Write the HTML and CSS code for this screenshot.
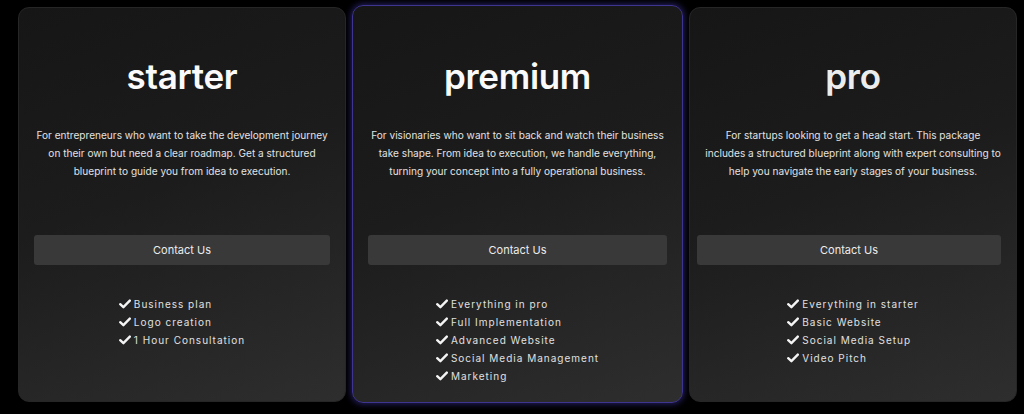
FILE: index.html
```html
<!DOCTYPE html>
<html lang="en">
<head>
<meta charset="utf-8">
<title>Pricing</title>
<link rel="stylesheet" href="styles.css">
</head>
<body>
<main class="plans">
  <section class="card">
    <h2 class="title">starter</h2>
    <p class="desc">For entrepreneurs who want to take the development journey on their own but need a clear roadmap. Get a structured blueprint to guide you from idea to execution.</p>
    <button class="cta">Contact Us</button>
    <ul class="features">
      <li><svg class="check" viewBox="0 0 12 10"><polyline points="1.2,5.2 4.4,8.2 10.8,1.6"/></svg>Business plan</li>
      <li><svg class="check" viewBox="0 0 12 10"><polyline points="1.2,5.2 4.4,8.2 10.8,1.6"/></svg>Logo creation</li>
      <li><svg class="check" viewBox="0 0 12 10"><polyline points="1.2,5.2 4.4,8.2 10.8,1.6"/></svg>1 Hour Consultation</li>
    </ul>
  </section>
  <section class="card card-featured">
    <h2 class="title">premium</h2>
    <p class="desc">For visionaries who want to sit back and watch their business take shape. From idea to execution, we handle everything, turning your concept into a fully operational business.</p>
    <button class="cta">Contact Us</button>
    <ul class="features">
      <li><svg class="check" viewBox="0 0 12 10"><polyline points="1.2,5.2 4.4,8.2 10.8,1.6"/></svg>Everything in pro</li>
      <li><svg class="check" viewBox="0 0 12 10"><polyline points="1.2,5.2 4.4,8.2 10.8,1.6"/></svg>Full Implementation</li>
      <li><svg class="check" viewBox="0 0 12 10"><polyline points="1.2,5.2 4.4,8.2 10.8,1.6"/></svg>Advanced Website</li>
      <li><svg class="check" viewBox="0 0 12 10"><polyline points="1.2,5.2 4.4,8.2 10.8,1.6"/></svg>Social Media Management</li>
      <li><svg class="check" viewBox="0 0 12 10"><polyline points="1.2,5.2 4.4,8.2 10.8,1.6"/></svg>Marketing</li>
    </ul>
  </section>
  <section class="card">
    <h2 class="title title-muted">pro</h2>
    <p class="desc">For startups looking to get a head start. This package<br>includes a structured blueprint along with expert consulting to help you navigate the early stages of your business.</p>
    <button class="cta cta-wide">Contact Us</button>
    <ul class="features">
      <li><svg class="check" viewBox="0 0 12 10"><polyline points="1.2,5.2 4.4,8.2 10.8,1.6"/></svg>Everything in starter</li>
      <li><svg class="check" viewBox="0 0 12 10"><polyline points="1.2,5.2 4.4,8.2 10.8,1.6"/></svg>Basic Website</li>
      <li><svg class="check" viewBox="0 0 12 10"><polyline points="1.2,5.2 4.4,8.2 10.8,1.6"/></svg>Social Media Setup</li>
      <li><svg class="check" viewBox="0 0 12 10"><polyline points="1.2,5.2 4.4,8.2 10.8,1.6"/></svg>Video Pitch</li>
    </ul>
  </section>
</main>
</body>
</html>
```

FILE: styles.css
```css
* { box-sizing: border-box; }

html, body {
  margin: 0;
  background: #000;
}

body {
  font-family: Inter, "Noto Sans", "Liberation Sans", sans-serif;
  color: #fff;
  width: 1024px;
  height: 414px;
  overflow: hidden;
}

.plans {
  display: flex;
  gap: 6px;
  padding: 7px 0 0 18px;
  align-items: flex-start;
}

.card {
  width: 328px;
  height: 395px;
  flex: none;
  display: flex;
  flex-direction: column;
  align-items: center;
  padding: 46px 14px 0;
  border-radius: 11px;
  border: 1px solid #262626;
  background: linear-gradient(160deg, #161616 0%, #1c1c1c 45%, #2e2e2e 100%);
}

.card-featured {
  width: 331px;
  height: 398px;
  margin-top: -2px;
  padding-top: 48px;
  border: 1px solid #3d3590;
  box-shadow: 0 0 6px 1px rgba(70, 58, 180, 0.55);
}

.title {
  margin: 0;
  font-size: 35px;
  line-height: 44px;
  font-weight: 600;
  letter-spacing: -0.3px;
  color: #fafafa;
}

.title-muted {
  color: #ececec;
}

.desc {
  margin: 28px 0 0;
  font-size: 10.1px;
  line-height: 18px;
  text-align: center;
  color: #e2e2e2;
}

.cta {
  margin-top: 55px;
  width: calc(100% - 2px);
  height: 30px;
  border: none;
  border-radius: 3px;
  background: #393939;
  color: #ececec;
  font-family: inherit;
  font-size: 11px;
  cursor: pointer;
}

.cta-wide {
  align-self: flex-start;
  width: 304px;
  margin-left: -7px;
}

.features {
  list-style: none;
  margin: 30px 0 0;
  padding: 0;
  font-size: 10px;
  line-height: 18px;
  letter-spacing: 1px;
  color: #e0e0e0;
}

.features li {
  display: flex;
  align-items: center;
  gap: 3px;
}

.check {
  width: 12px;
  height: 10px;
  flex: none;
  fill: none;
  stroke: #f4f4f4;
  stroke-width: 2.4;
  stroke-linecap: round;
  stroke-linejoin: round;
}
```
